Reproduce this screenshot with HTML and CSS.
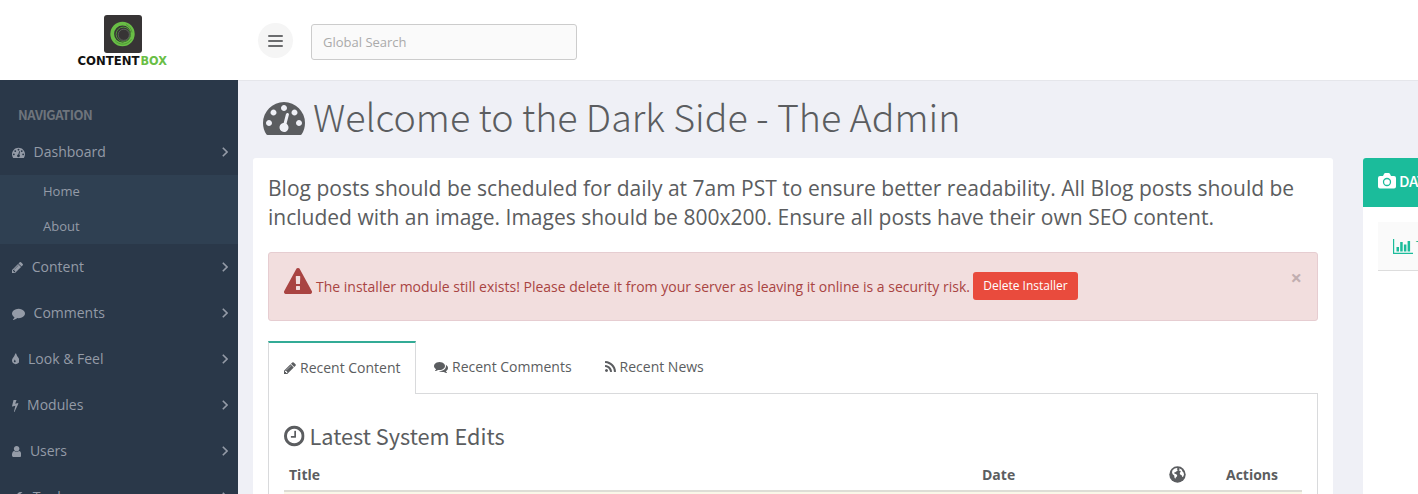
FILE: index.html
```html
<!DOCTYPE html>
<html lang="en">
<head>
<meta charset="utf-8">
<title>ContentBox Admin</title>
<link rel="stylesheet" href="styles.css">
</head>
<body>
<svg width="0" height="0" class="defs" aria-hidden="true">
  <symbol id="dash" viewBox="0 0 1792 1792"><path d="M384 1152q0-53-37.500-90.500t-90.500-37.500-90.500 37.500-37.500 90.500 37.500 90.500 90.500 37.500 90.500-37.500 37.500-90.500zm192-448q0-53-37.500-90.500t-90.500-37.500-90.500 37.500-37.500 90.500 37.500 90.500 90.500 37.500 90.500-37.500 37.500-90.500zm428 481l101-382q6-26-7.500-48.500t-38.500-29.500-48 6.500-30 39.500l-101 382q-60 5-107 43.500t-63 98.500q-20 77 20 146t117 89 146-20 89-117q16-60-6-117t-72-91zm660-33q0-53-37.500-90.500t-90.500-37.500-90.500 37.500-37.500 90.500 37.500 90.500 90.500 37.500 90.500-37.500 37.500-90.500zm-640-640q0-53-37.500-90.500t-90.500-37.500-90.500 37.500-37.500 90.500 37.500 90.500 90.500 37.500 90.500-37.500 37.500-90.500zm448 192q0-53-37.500-90.500t-90.500-37.500-90.500 37.500-37.500 90.500 37.500 90.500 90.500 37.500 90.500-37.500 37.500-90.500zm320 448q0 261-141 483-19 29-54 29h-1402q-35 0-54-29-141-221-141-483 0-182 71-348t191-286 286-191 348-71 348 71 286 191 191 286 71 348z"/></symbol>
  <symbol id="pencil" viewBox="128 0 1536 1792"><path d="M491 1536l91-91-235-235-91 91v107h128v128h107zm523-928q0-22-22-22-10 0-17 7l-542 542q-7 7-7 17 0 22 22 22 10 0 17-7l542-542q7-7 7-17zm-54-192l416 416-832 832h-416v-416zm683 96q0 53-37 90l-166 166-416-416 166-165q36-38 90-38 53 0 91 38l235 234q37 39 37 91z"/></symbol>
  <symbol id="comment" viewBox="0 0 1792 1792"><path d="M1792 896q0 174-120 321.500t-326 233-450 85.500q-70 0-145-8-198 175-460 242-49 14-114 22-17 2-30.500-9t-17.500-29v-1q-3-4-.5-12t2-10 4.500-9.500l6-9 7-8.500 8-9q7-8 31-34.500t34.500-38 31-39.500 32.500-51 27-59 26-76q-157-89-247.500-220t-90.500-281q0-130 71-248.500t191-204.500 286-136.500 348-50.500q244 0 450 85.500t326 233 120 321.500z"/></symbol>
  <symbol id="tint" viewBox="384 0 1024 1792"><path d="M896 1152q0-36-20-69-1-1-15.500-22.500t-25.500-38-25-44-21-50.500q-4-16-21-16t-21 16q-7 23-21 50.500t-25 44-25.500 38-15.500 22.500q-20 33-20 69 0 53 37.500 90.500t90.500 37.500 90.500-37.500 37.500-90.500zm512-128q0 212-150 362t-362 150-362-150-150-362q0-145 81-275 6-9 62.500-90.500t101-151 99.500-178 83-201.500q9-30 34-47t51-17 51.500 17 33.500 47q28 93 83 201.500t99.500 178 101 151 62.500 90.500q81 127 81 275z"/></symbol>
  <symbol id="bolt" viewBox="448 0 896 1792"><path d="M1333 566q18 20 7 44l-540 1157q-13 25-42 25-4 0-14-2-17-5-25.500-19t-4.500-30l197-808-406 101q-4 1-12 1-18 0-31-11-18-15-13-39l201-825q4-14 16-23t28-9h328q19 0 32 12.500t13 29.500q0 8-5 18l-171 463 396-98q8-2 12-2 19 0 34 15z"/></symbol>
  <symbol id="user" viewBox="256 0 1280 1792"><path d="M1536 1399q0 109-62.500 187t-150.500 78h-854q-88 0-150.500-78t-62.500-187q0-85 8.500-160.500t31.500-152 58.500-131 94-89 134.500-34.500q131 128 313 128t313-128q76 0 134.500 34.500t94 89 58.500 131 31.500 152 8.500 160.500zm-256-887q0 159-112.500 271.500t-271.500 112.500-271.500-112.500-112.500-271.500 112.500-271.500 271.500-112.500 271.500 112.500 112.500 271.500z"/></symbol>
  <symbol id="wrench" viewBox="0 0 1664 1792"><path fill-rule="evenodd" d="M40 1480L720 800Q640 520 800 320T1250 130Q1370 130 1460 190L1180 350V570L1380 690L1640 540Q1650 800 1470 950T1020 1060L330 1750Q260 1800 180 1750L50 1620Q-10 1550 40 1480zM256 1472a64 64 0 1 0 .1 0z"/></symbol>
  <symbol id="warn" viewBox="0 0 1792 1792"><path d="M1024 1375v-190q0-14-9.500-23.500t-22.500-9.500h-192q-13 0-22.500 9.500t-9.500 23.500v190q0 14 9.500 23.500t22.500 9.500h192q13 0 22.500-9.500t9.500-23.500zm-2-374l18-459q0-12-10-19-13-11-24-11h-220q-11 0-24 11-10 7-10 21l17 457q0 10 10 16.500t24 6.500h185q14 0 23.500-6.500t10.500-16.500zm-14-934l768 1408q35 63-2 126-17 29-46.500 46t-63.500 17h-1536q-34 0-63.500-17t-46.500-46q-37-63-2-126l768-1408q17-31 47-49t65-18 65 18 47 49z"/></symbol>
  <symbol id="comments" viewBox="0 0 1792 1792"><path d="M1408 768q0 139-94 257t-256.500 186.500-353.500 68.500q-86 0-176-16-124 88-278 128-36 9-86 16h-3q-11 0-20.500-8t-11.500-21q-1-3-1-6.500t.5-6.500 2-6l2.500-5 3.500-5.500 4-5 4.500-5 4-4.500q5-6 23-25t26-29.500 22.500-29 25-38.500 20.500-44q-124-72-195-177t-71-224q0-139 94-257t256.500-186.500 353.500-68.500 353.500 68.500 256.500 186.500 94 257zm384 256q0 120-71 224.500t-195 176.500q10 24 20.500 44t25 38.500 22.500 29 26 29.500 23 25q1 1 4 4.500t4.500 5 4 5 3.500 5.500l2.500 5 2 6 .5 6.500-1 6.500q-3 14-13 22t-22 7q-50-7-86-16-154-40-278-128-90 16-176 16-271 0-472-132 58 4 88 4 161 0 309-45t264-129q125-92 192-212t67-254q0-77-23-152 129 71 204 178t75 230z"/></symbol>
  <symbol id="rss" viewBox="192 0 1408 1792"><path d="M576 1344q0 80-56 136t-136 56-136-56-56-136 56-136 136-56 136 56 56 136zm512 123q2 28-17 48-18 21-47 21h-135q-25 0-43-16.500t-20-41.500q-22-229-184.500-391.500t-391.500-184.500q-25-2-41.500-20t-16.500-43v-135q0-29 21-47 17-17 43-17h5q160 13 306 80.500t259 181.500q114 113 181.500 259t80.500 306zm512 2q2 27-18 47-18 20-46 20h-143q-26 0-44.500-17.500t-19.500-42.500q-12-215-101-408.500t-231.500-336-336-231.500-408.500-102q-25-1-42.500-19.500t-17.500-43.500v-143q0-28 20-46 18-18 44-18h3q262 13 501.500 120t425.500 294q187 186 294 425.500t120 501.500z"/></symbol>
  <symbol id="clock" viewBox="128 0 1536 1792"><path d="M1024 544v448q0 14-9 23t-23 9h-320q-14 0-23-9t-9-23v-64q0-14 9-23t23-9h224v-352q0-14 9-23t23-9h64q14 0 23 9t9 23zm416 352q0-148-73-273t-198-198-273-73-273 73-198 198-73 273 73 273 198 198 273 73 273-73 198-198 73-273zm224 0q0 209-103 385.500t-279.500 279.500-385.500 103-385.500-103-279.500-279.500-103-385.500 103-385.500 279.500-279.500 385.500-103 385.500 103 279.500 279.500 103 385.500z"/></symbol>
  <symbol id="chev" viewBox="0 0 6 10"><path d="M.8 .8l4.200 4.200-4.200 4.200" fill="none" stroke="currentColor" stroke-width="1.600"/></symbol>
</svg>

<header class="topbar">
  <div class="brand">
    <svg class="logo" width="92" height="54" viewBox="0 0 92 54">
      <rect x="27" y="1" width="38" height="38" rx="3" fill="#373435"/>
      <circle cx="45.500" cy="20" r="10.300" fill="none" stroke="#69be45" stroke-width="3.800"/>
      <path d="M38 26.500a10 10 0 0 0 16.500-1.500M49 10.500a10.500 10.500 0 0 1 6 8" fill="none" stroke="#4a8f35" stroke-width=".8"/>
      <circle cx="46.300" cy="20.300" r="7.200" fill="#373435" stroke="#4c9636" stroke-width="1"/>
      <circle cx="46.800" cy="20.800" r="5.600" fill="none" stroke="#6a7468" stroke-width=".7"/>
      <text class="logo-text" x="0.500" y="50.500" textLength="62" lengthAdjust="spacingAndGlyphs" fill="#111">CONTENT</text>
      <text class="logo-text" x="63.500" y="50.500" textLength="26.500" lengthAdjust="spacingAndGlyphs" fill="#69be45">BOX</text>
    </svg>
  </div>
  <button class="burger" aria-label="Toggle menu"><span></span><span></span><span></span></button>
  <input class="search" type="text" placeholder="Global Search">
</header>

<div class="shell">
  <nav class="sidebar">
    <h2 class="nav-title">NAVIGATION</h2>
    <a class="item"><svg class="fa"><use href="#dash"/></svg><span>Dashboard</span><svg class="chev"><use href="#chev"/></svg></a>
    <div class="submenu"><a>Home</a><a>About</a></div>
    <a class="item"><svg class="fa w1536"><use href="#pencil"/></svg><span>Content</span><svg class="chev"><use href="#chev"/></svg></a>
    <a class="item"><svg class="fa"><use href="#comment"/></svg><span>Comments</span><svg class="chev"><use href="#chev"/></svg></a>
    <a class="item"><svg class="fa w1024"><use href="#tint"/></svg><span>Look &amp; Feel</span><svg class="chev"><use href="#chev"/></svg></a>
    <a class="item"><svg class="fa w896"><use href="#bolt"/></svg><span>Modules</span><svg class="chev"><use href="#chev"/></svg></a>
    <a class="item"><svg class="fa w1280"><use href="#user"/></svg><span>Users</span><svg class="chev"><use href="#chev"/></svg></a>
    <a class="item"><svg class="fa w1664"><use href="#wrench"/></svg><span>Tools</span><svg class="chev"><use href="#chev"/></svg></a>
  </nav>

  <main class="main">
    <h1 class="title"><svg class="fa"><use href="#dash"/></svg><span>Welcome to the Dark Side - The Admin</span></h1>
    <div class="columns">
      <section class="panel">
        <p class="lead">Blog posts should be scheduled for daily at 7am PST to ensure better readability. All Blog posts should be<br>included with an image. Images should be 800x200. Ensure all posts have their own SEO content.</p>
        <div class="alert">
          <svg class="fa warn"><use href="#warn"/></svg>
          <span class="alert-text">The installer module still exists! Please delete it from your server as leaving it online is a security risk.</span>
          <a class="btn">Delete Installer</a>
          <span class="close">×</span>
        </div>
        <div class="tabs">
          <a class="tab active"><svg class="fa w1536"><use href="#pencil"/></svg><span>Recent Content</span></a>
          <a class="tab"><svg class="fa"><use href="#comments"/></svg><span>Recent Comments</span></a>
          <a class="tab"><svg class="fa w1408"><use href="#rss"/></svg><span>Recent News</span></a>
        </div>
        <div class="tab-body">
          <h3 class="subtitle"><svg class="fa w1536"><use href="#clock"/></svg><span>Latest System Edits</span></h3>
          <div class="thead">
            <span>Title</span><span>Date</span>
            <span class="center"><svg width="17" height="17" viewBox="0 0 17 17"><circle cx="8.500" cy="8.500" r="8.200" fill="#5b5d60"/><path d="M3.400 4.600L5.200 2.800 7.400 2l1.200.4-.9 1.200 1.300.4-1.600 1.500-1.200.8-1 .3.100 1 1.400.4 1.500 1-.3 1.400-1.100 1-.5 1.300-.8-.9-.3-2.200-1.500-1.400-.7-1.600zM10 2.300l2.600 1.300.9 1.900 1 .9.500 2.100-.7 2-1.100.6-.5-1.900-1.500-.6-.5-1.500 1.100-1.400-.6-.9-1.500-.3.900-1.100z" fill="#fff"/></svg></span>
            <span class="center">Actions</span>
          </div>
          <div class="trow"></div>
        </div>
      </section>
      <aside class="stats">
        <div class="stats-head"><svg width="18" height="16" viewBox="0 0 18 16"><path fill="#fff" d="M2 3h3l1-2q.4-1 1.400-1h3.200q1 0 1.400 1l1 2h3q2 0 2 2v8.500q0 2-2 2H2q-2 0-2-2V5q0-2 2-2z"/><circle cx="9" cy="9" r="3.500" fill="none" stroke="#1bbc9b" stroke-width="1.300"/></svg><span>DATA</span></div>
        <div class="stats-tab"><svg width="20" height="15" viewBox="0 0 20 15"><path fill="#1bbc9b" d="M0 0h1.200v13.800H20V15H0zM3.500 8h2.500v4.500H3.500zM7.200 3h2.500v9.500H7.200zM10.900 5.500h2.500v7h-2.500zM14.600 2h2.500v10.500h-2.500z"/></svg><span>Top</span></div>
      </aside>
    </div>
  </main>
</div>
</body>
</html>
```

FILE: styles.css
```css
* { box-sizing: border-box; }
html, body { height: 494px; overflow: hidden; }
body {
  margin: 0;
  background: #eff0f6;
  color: #5b5d60;
  font: 14px/20px "Open Sans", "Noto Sans", sans-serif;
}
.defs { position: absolute; }
.fa {
  width: 1em; height: 1em;
  flex: none;
  fill: currentColor;
  vertical-align: -0.143em;
}
.w1664 { width: .929em; }
.w1536 { width: .857em; }
.w1408 { width: .786em; }
.w1280 { width: .714em; }
.w1024 { width: .571em; }
.w896 { width: .5em; }

.topbar {
  display: flex;
  height: 80px;
  background: #fff;
}
.brand { width: 258px; padding: 14px 0 0 77px; }
.logo { display: block; }
.logo-text { font: bold 12.400px "DejaVu Sans", sans-serif; }
.burger {
  display: flex;
  flex-direction: column;
  align-items: center;
  justify-content: center;
  gap: 3px;
  width: 35px; height: 35px;
  margin: 23px 18px 0 0;
  padding: 1px 0 0;
  border: 0;
  border-radius: 50%;
  background: #f5f5f5;
}
.burger span { width: 15px; height: 2px; border-radius: 1px; background: #6b6c6e; }
.search {
  width: 266px; height: 36px;
  margin-top: 24px;
  padding: 0 11px;
  border: 1px solid #ccc;
  border-radius: 3px;
  background: #fafafa;
  font: 13px "Open Sans", sans-serif;
}
.search::placeholder { color: #aaa; opacity: 1; }

.shell { display: flex; height: 414px; }
.sidebar {
  flex: none;
  width: 238px;
  overflow: hidden;
  background: #2a3849;
  color: #949ba7;
}
.nav-title {
  height: 49px;
  margin: 0;
  padding: 25px 0 0 18px;
  color: #6e747c;
  font: bold 13px/20px "Noto Sans CJK SC", sans-serif;
  letter-spacing: -.45px;
}
.item {
  display: flex;
  align-items: center;
  gap: 8.600px;
  height: 46px;
  padding: 0 10px 0 12px;
}
.item .fa { font-size: 13px; }
.chev { width: 6px; height: 10px; margin-left: auto; }
.submenu {
  height: 69px;
  background: #2f4052;
  font-size: 13px;
}
.submenu a { display: block; height: 35px; padding-left: 43px; line-height: 32px; }

.main {
  flex: 1;
  min-width: 0;
  border-top: 1px solid #e5e6eb;
  overflow: hidden;
}
.title {
  display: flex;
  align-items: center;
  gap: 8px;
  height: 77px;
  margin: 0;
  padding: 0 0 6px 25px;
  font: 300 37.650px/71px "Noto Sans CJK SC", sans-serif;
  white-space: nowrap;
}
.title span { padding-bottom: 2px; }
.title .fa { font-size: 42px; }
.columns { display: flex; gap: 30px; padding-left: 15px; }
.panel {
  flex: none;
  width: 1080px; height: 340px;
  padding: 16px 15px 0;
  border-radius: 3px;
  background: #fff;
}
.lead { margin: 0 0 20px; font-size: 21.020px; line-height: 29px; white-space: nowrap; }
.alert {
  display: flex;
  align-items: flex-start;
  height: 69px;
  padding: 14px 15px 0;
  border: 1px solid #e6cdd1;
  border-radius: 3px;
  background: #f2dede;
  color: #a94442;
  white-space: nowrap;
}
.warn { margin-top: 1px; font-size: 28px; }
.alert-text { margin: 10px 3px 0 4px; }
.btn {
  width: 105px; height: 28px;
  margin-top: 5px;
  border-radius: 3px;
  background: #e94b3d;
  color: #fff;
  font-size: 12px;
  line-height: 27px;
  text-align: center;
}
.close { margin: 0 0 0 auto; color: #c1aeb0; font-size: 20px; font-weight: 700; line-height: 22px; }
.tabs {
  display: flex;
  height: 53px;
  margin-top: 20px;
  border-bottom: 1px solid #d9dadc;
}
.tab { display: flex; height: 52px; align-items: center; gap: 4px; padding: 0 15px 0 18px; white-space: nowrap; }
.tab.active {
  height: 53px;
  padding: 0 15px 2px;
  width: 148px;
  border: 1px solid #d9dadc;
  border-top: 2px solid #33ab96;
  border-bottom: 0;
  background: #fff;
}
.tab-body {
  height: 110px;
  padding: 27px 15px 0;
  border: 1px solid #d9dadc;
  border-top: 0;
}
.subtitle {
  display: flex;
  align-items: center;
  gap: 5px;
  height: 30px;
  margin: 0;
  padding-bottom: 1px;
  font: 400 21.700px/28px "Noto Sans CJK SC", sans-serif;
}
.subtitle .fa { font-size: 24px; }
.thead {
  display: grid;
  grid-template-columns: 693px 158px 74px 1fr;
  align-items: center;
  height: 41px;
  padding: 8px 12px 0 5px;
  border-bottom: 2px solid #deddd6;
  font-weight: 700;
}
.center { display: flex; justify-content: center; }
.trow { height: 12px; background: #faf7e8; }

.stats { flex: none; width: 240px; height: 340px; border-radius: 3px; background: #fff; }
.stats-head {
  display: flex;
  align-items: center;
  gap: 3px;
  height: 49px;
  padding: 0 15px 3px;
  border-radius: 3px 0 0;
  background: #1bbc9b;
  color: #fff;
  font: 500 15px/20px "Noto Sans CJK SC", sans-serif;
  letter-spacing: -.4px;
}
.stats-tab {
  display: flex;
  align-items: center;
  gap: 3px;
  height: 49px;
  margin: 15px 0 0 15px;
  padding-left: 15px;
  border-bottom: 1px solid #ddd;
  background: #fafafa;
  color: #1bbc9b;
}
```
